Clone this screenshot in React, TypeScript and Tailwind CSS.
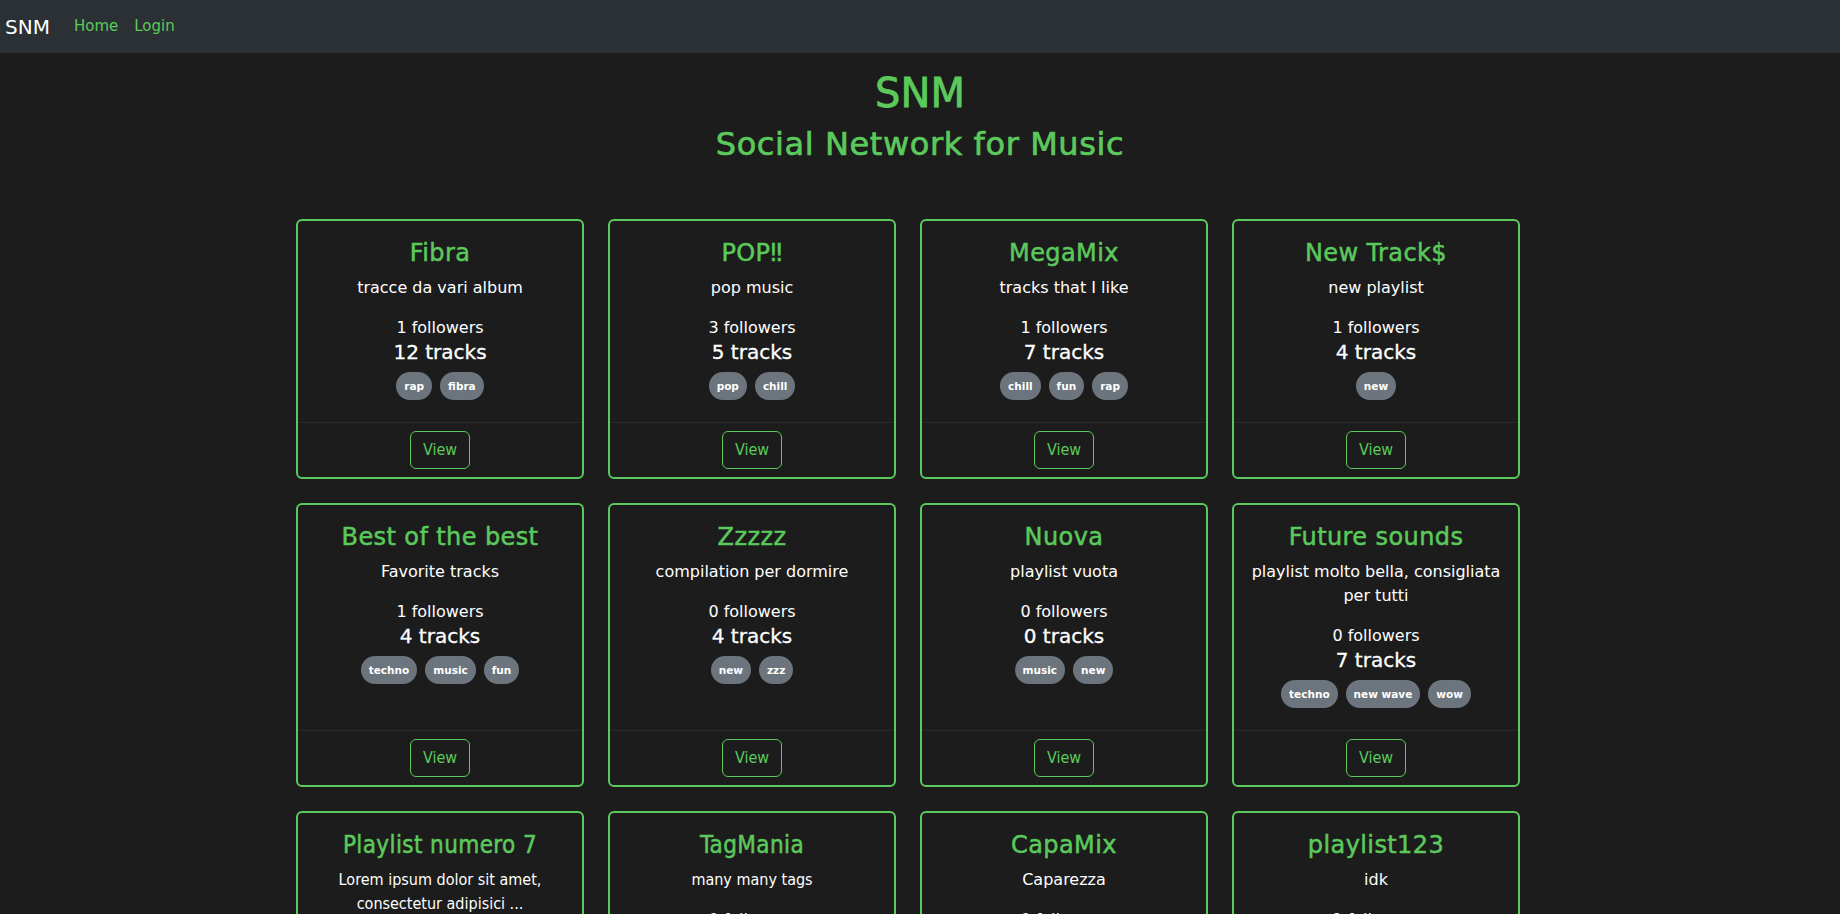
import React from 'react';

type Playlist = {
  title: string;
  description: string;
  followers: number;
  tracks: number;
  tags: string[];
  narrow?: boolean;
};

const playlists: Playlist[] = [
  { title: 'Fibra', description: 'tracce da vari album', followers: 1, tracks: 12, tags: ['rap', 'fibra'] },
  { title: 'POP‼', description: 'pop music', followers: 3, tracks: 5, tags: ['pop', 'chill'] },
  { title: 'MegaMix', description: 'tracks that I like', followers: 1, tracks: 7, tags: ['chill', 'fun', 'rap'] },
  { title: 'New Track$', description: 'new playlist', followers: 1, tracks: 4, tags: ['new'] },
  { title: 'Best of the best', description: 'Favorite tracks', followers: 1, tracks: 4, tags: ['techno', 'music', 'fun'] },
  { title: 'Zzzzz', description: 'compilation per dormire', followers: 0, tracks: 4, tags: ['new', 'zzz'] },
  { title: 'Nuova', description: 'playlist vuota', followers: 0, tracks: 0, tags: ['music', 'new'] },
  {
    title: 'Future sounds',
    description: 'playlist molto bella, consigliata per tutti',
    followers: 0,
    tracks: 7,
    tags: ['techno', 'new wave', 'wow'],
  },
  {
    title: 'Playlist numero 7',
    description: 'Lorem ipsum dolor sit amet, consectetur adipisici ...',
    followers: 0,
    tracks: 3,
    tags: ['rock'],
    narrow: true,
  },
  { title: 'TagMania', description: 'many many tags', followers: 0, tracks: 2, tags: ['a', 'b', 'c'], narrow: true },
  { title: 'CapaMix', description: 'Caparezza', followers: 0, tracks: 5, tags: ['rap'] },
  { title: 'playlist123', description: 'idk', followers: 1, tracks: 1, tags: ['new'] },
];

const PlaylistCard = ({ playlist }: { playlist: Playlist }) => {
  // a couple of cards in the reference are set in a narrower face
  const narrowFont = playlist.narrow ? "font-['DejaVu_Sans_Condensed','Liberation_Sans',sans-serif]" : '';
  return (
    <div className="w-[288px] mr-6 mb-6 flex flex-col border-2 border-[#5bc95b] rounded-md bg-[#1c1c1c]">
      <div className="flex-1 px-4 pt-[18px] pb-[22px] text-center">
        <h4
          className={`text-[24px] leading-[1.2] mb-2 tracking-[0.4px] text-[#5bc95b] [-webkit-text-stroke:0.5px_currentColor] ${narrowFont}`}
        >
          {playlist.title}
        </h4>
        <p className={`mb-4 leading-6 text-white ${narrowFont}`}>{playlist.description}</p>
        <p className="leading-6 text-white">{playlist.followers} followers</p>
        <h5 className="text-[20px] leading-[1.2] mb-2 text-white [-webkit-text-stroke:0.3px_currentColor]">
          {playlist.tracks} tracks
        </h5>
        <div className="mt-2 flex justify-center gap-2">
          {playlist.tags.map((tag) => (
            <span
              key={tag}
              className="h-[28px] px-2 flex items-center rounded-full bg-[#6c757d] text-white text-[10.5px] font-bold leading-none"
            >
              {tag}
            </span>
          ))}
        </div>
      </div>
      <div className="border-t border-[#2a2a2a] py-2 flex justify-center">
        <button className="h-[38px] px-3 border border-[#5bc95b] rounded-md text-[#5bc95b] text-base font-['DejaVu_Sans_Condensed','Liberation_Sans',sans-serif]">
          View
        </button>
      </div>
    </div>
  );
};

export default function App() {
  return (
    <div className="min-h-screen bg-[#1c1c1c] font-['DejaVu_Sans','Verdana',sans-serif] text-white">
      <nav className="h-[53px] bg-[#2b3035] flex items-center pl-[5px]">
        <span className="text-[20px] text-white mr-4">SNM</span>
        <a className="px-2 text-[15px] text-[#5bc95b]" href="#">Home</a>
        <a className="px-2 text-[15px] text-[#5bc95b]" href="#">Login</a>
      </nav>

      <header className="mt-4 text-center text-[#5bc95b]">
        <h1 className="text-[40px] leading-[1.2] mb-2 [-webkit-text-stroke:0.8px_currentColor]">SNM</h1>
        <h2 className="text-[32px] leading-[1.2] tracking-[0.6px] [-webkit-text-stroke:0.7px_currentColor]">
          Social Network for Music
        </h2>
      </header>

      <div className="max-w-[1320px] mx-auto px-3 mt-14">
        <div className="flex flex-wrap justify-center">
          {playlists.map((p) => (
            <PlaylistCard key={p.title} playlist={p} />
          ))}
        </div>
      </div>
    </div>
  );
}
